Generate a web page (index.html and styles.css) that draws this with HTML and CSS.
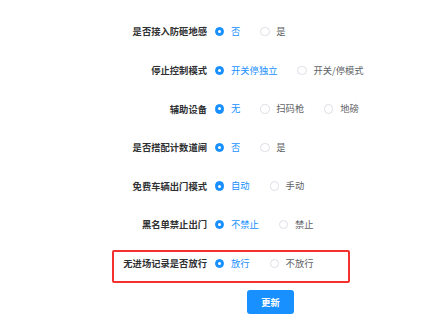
FILE: index.html
```html
<!DOCTYPE html>
<html lang="zh-CN">
<head>
<meta charset="utf-8">
<link rel="stylesheet" href="styles.css">
</head>
<body>
<form class="form">
  <div class="item">
    <span class="label">是否接入防砸地感</span>
    <div class="group">
      <label class="radio checked"><span class="dot"></span><span class="text">否</span></label>
      <label class="radio"><span class="dot"></span><span class="text">是</span></label>
    </div>
  </div>
  <div class="item">
    <span class="label">停止控制模式</span>
    <div class="group">
      <label class="radio checked"><span class="dot"></span><span class="text">开关停独立</span></label>
      <label class="radio"><span class="dot"></span><span class="text">开关/停模式</span></label>
    </div>
  </div>
  <div class="item">
    <span class="label">辅助设备</span>
    <div class="group">
      <label class="radio checked"><span class="dot"></span><span class="text">无</span></label>
      <label class="radio"><span class="dot"></span><span class="text">扫码枪</span></label>
      <label class="radio"><span class="dot"></span><span class="text">地磅</span></label>
    </div>
  </div>
  <div class="item">
    <span class="label">是否搭配计数道闸</span>
    <div class="group">
      <label class="radio checked"><span class="dot"></span><span class="text">否</span></label>
      <label class="radio"><span class="dot"></span><span class="text">是</span></label>
    </div>
  </div>
  <div class="item">
    <span class="label">免费车辆出门模式</span>
    <div class="group">
      <label class="radio checked"><span class="dot"></span><span class="text">自动</span></label>
      <label class="radio"><span class="dot"></span><span class="text">手动</span></label>
    </div>
  </div>
  <div class="item">
    <span class="label">黑名单禁止出门</span>
    <div class="group">
      <label class="radio checked"><span class="dot"></span><span class="text">不禁止</span></label>
      <label class="radio"><span class="dot"></span><span class="text">禁止</span></label>
    </div>
  </div>
  <div class="item highlight">
    <span class="label">无进场记录是否放行</span>
    <div class="group">
      <label class="radio checked"><span class="dot"></span><span class="text">放行</span></label>
      <label class="radio"><span class="dot"></span><span class="text">不放行</span></label>
    </div>
  </div>
  <div class="actions">
    <button type="button" class="btn">更新</button>
  </div>
</form>
</body>
</html>
```
FILE: styles.css
```css
html, body {
  margin: 0;
  padding: 0;
  background: #ffffff;
}
body {
  width: 440px;
  height: 325px;
  overflow: hidden;
  font-family: "Noto Sans CJK SC", "Noto Sans", sans-serif;
  font-size: 9.3px;
}
.form {
  display: flex;
  flex-direction: column;
  gap: 12px;
  padding-top: 18.4px;
}
.item {
  display: flex;
  align-items: center;
  height: 26.6px;
}
.label {
  width: 215px;
  box-sizing: border-box;
  padding-right: 8px;
  text-align: right;
  color: #303133;
  font-weight: 700;
  line-height: 26.6px;
}
.group {
  display: flex;
  align-items: center;
  gap: 20px;
}
.radio {
  display: flex;
  align-items: center;
  gap: 6.7px;
  color: #606266;
  line-height: 1;
}
.dot {
  width: 9.3px;
  height: 9.3px;
  box-sizing: border-box;
  border: 1px solid #dcdfe6;
  border-radius: 50%;
  background: #fff;
  display: flex;
  align-items: center;
  justify-content: center;
}
.radio.checked .dot {
  border-color: #1890ff;
  background: #1890ff;
}
.radio.checked .dot::after {
  content: "";
  width: 3px;
  height: 3px;
  border-radius: 50%;
  background: #fff;
}
.radio.checked .text {
  color: #1890ff;
}
.highlight {
  position: relative;
}
.highlight::before {
  content: "";
  position: absolute;
  left: 112px;
  width: 238px;
  top: 0;
  bottom: -6.5px;
  box-sizing: border-box;
  border: 2px solid #f5312f;
  border-radius: 2px;
  pointer-events: none;
}
.actions {
  display: flex;
  padding-left: 247px;
  margin-top: 1.4px;
}
.btn {
  width: 47px;
  height: 24px;
  border: none;
  border-radius: 3px;
  background: #1890ff;
  color: #fff;
  font-family: inherit;
  font-size: 9.3px;
  font-weight: 700;
  padding: 0;
}
```
